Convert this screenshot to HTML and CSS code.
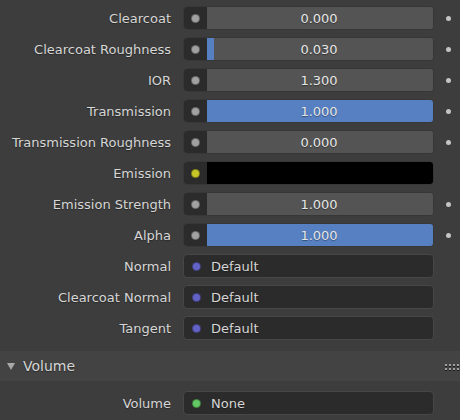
FILE: index.html
```html
<!DOCTYPE html>
<html>
<head>
<meta charset="utf-8">
<link rel="stylesheet" href="styles.css">
</head>
<body>
<div class="panel">
  <div class="rows">
    <div class="row row-cut">
      <span class="label"></span>
      <div class="field num"><span class="sock"><i class="dot gray"></i></span><span class="val"></span></div>
      <i class="keydot"></i>
    </div>
    <div class="row">
      <span class="label">Clearcoat</span>
      <div class="field num"><span class="sock"><i class="dot gray"></i></span><span class="val"><span class="text">0.000</span></span></div>
      <i class="keydot"></i>
    </div>
    <div class="row">
      <span class="label">Clearcoat Roughness</span>
      <div class="field num"><span class="sock"><i class="dot gray"></i></span><span class="val"><span class="fill" style="width:3%"></span><span class="text">0.030</span></span></div>
      <i class="keydot"></i>
    </div>
    <div class="row">
      <span class="label">IOR</span>
      <div class="field num"><span class="sock"><i class="dot gray"></i></span><span class="val"><span class="text">1.300</span></span></div>
      <i class="keydot"></i>
    </div>
    <div class="row">
      <span class="label">Transmission</span>
      <div class="field num"><span class="sock"><i class="dot gray"></i></span><span class="val full"><span class="text">1.000</span></span></div>
      <i class="keydot"></i>
    </div>
    <div class="row">
      <span class="label">Transmission Roughness</span>
      <div class="field num"><span class="sock"><i class="dot gray"></i></span><span class="val"><span class="text">0.000</span></span></div>
      <i class="keydot"></i>
    </div>
    <div class="row">
      <span class="label">Emission</span>
      <div class="field num"><span class="sock"><i class="dot yellow"></i></span><span class="val color"></span></div>
      <i class="keydot none"></i>
    </div>
    <div class="row">
      <span class="label">Emission Strength</span>
      <div class="field num"><span class="sock"><i class="dot gray"></i></span><span class="val"><span class="text">1.000</span></span></div>
      <i class="keydot"></i>
    </div>
    <div class="row">
      <span class="label">Alpha</span>
      <div class="field num"><span class="sock"><i class="dot gray"></i></span><span class="val full"><span class="text">1.000</span></span></div>
      <i class="keydot"></i>
    </div>
    <div class="row">
      <span class="label">Normal</span>
      <div class="field link"><i class="dot purple"></i><span class="ltext">Default</span></div>
      <i class="keydot none"></i>
    </div>
    <div class="row">
      <span class="label">Clearcoat Normal</span>
      <div class="field link"><i class="dot purple"></i><span class="ltext">Default</span></div>
      <i class="keydot none"></i>
    </div>
    <div class="row">
      <span class="label">Tangent</span>
      <div class="field link"><i class="dot purple"></i><span class="ltext">Default</span></div>
      <i class="keydot none"></i>
    </div>
  </div>
  <div class="header">
    <span class="tri"></span>
    <span class="htitle">Volume</span>
    <span class="grip"><i></i><i></i><i></i><i></i><i></i><i></i><i></i><i></i></span>
  </div>
  <div class="rows vol">
    <div class="row">
      <span class="label">Volume</span>
      <div class="field link"><i class="dot green"></i><span class="ltext">None</span></div>
      <i class="keydot none"></i>
    </div>
  </div>
</div>
</body>
</html>
```

FILE: styles.css
```css
html, body {
  margin: 0;
  padding: 0;
  background: #3d3d3d;
  overflow: hidden;
}
body {
  width: 460px;
  height: 420px;
  font-family: "DejaVu Sans", "Liberation Sans", sans-serif;
  font-size: 13px;
  color: #d4d4d4;
}
.panel {
  display: flex;
  flex-direction: column;
}
.rows {
  display: flex;
  flex-direction: column;
  gap: 7px;
  margin-top: -25px;
}
.rows.vol {
  margin-top: 10px;
}
.row {
  display: grid;
  grid-template-columns: 171px 251px 26px;
  column-gap: 12px;
  align-items: center;
  height: 24px;
}
.label {
  text-align: right;
  white-space: nowrap;
  color: #d6d6d6;
  text-shadow: 0 1px 1px rgba(0,0,0,0.35);
}
.field {
  box-sizing: border-box;
  height: 24px;
  border-radius: 4px;
  display: flex;
  overflow: hidden;
}
.field.num {
  border: 1px solid #373737;
  background: #545454;
}
.sock {
  width: 23px;
  background: #2b2b2b;
  display: flex;
  align-items: center;
  justify-content: center;
  flex: none;
}
.val {
  position: relative;
  flex: 1;
  display: flex;
  align-items: center;
  justify-content: center;
  background: #545454;
}
.val.full { background: #5680c2; }
.val.color { background: #000000; }
.fill {
  position: absolute;
  left: 0;
  top: 0;
  bottom: 0;
  background: #5680c2;
}
.text {
  position: relative;
  color: #e6e6e6;
  text-shadow: 0 1px 1px rgba(0,0,0,0.4);
  margin-right: 2px;
}
.dot {
  display: block;
  width: 9px;
  height: 9px;
  border-radius: 50%;
  box-sizing: border-box;
  border: 1px solid rgba(0,0,0,0.35);
  flex: none;
}
.dot.gray { background: #a1a1a1; }
.dot.yellow { background: #c7c729; }
.dot.purple { background: #6363c7; }
.dot.green { background: #63c763; }
.keydot {
  display: block;
  width: 5px;
  height: 5px;
  border-radius: 50%;
  background: #c4c4c4;
}
.keydot.none { visibility: hidden; }
.field.link {
  border: 1px solid #474747;
  background: #2b2b2b;
  align-items: center;
  padding-left: 8px;
}
.ltext {
  margin-left: 10px;
  color: #d6d6d6;
  text-shadow: 0 1px 1px rgba(0,0,0,0.35);
}
.header {
  margin-top: 11px;
  height: 30px;
  background: #434343;
  display: flex;
  align-items: center;
  padding-left: 7px;
  padding-right: 1px;
}
.tri {
  width: 0;
  height: 0;
  border-left: 4px solid transparent;
  border-right: 4px solid transparent;
  border-top: 7px solid #a8a8a8;
  margin-top: 1px;
}
.htitle {
  margin-left: 8px;
  font-size: 14px;
  color: #d6d6d6;
  text-shadow: 0 1px 1px rgba(0,0,0,0.4);
  flex: 1;
}
.grip {
  display: grid;
  grid-template-columns: repeat(4, 2px);
  grid-template-rows: repeat(2, 2px);
  column-gap: 2px;
  row-gap: 2px;
  margin-top: 2px;
}
.grip i {
  display: block;
  width: 2px;
  height: 2px;
  background: #a0a0a0;
  box-shadow: 0 1px 0 #1a1a1a;
}
```
